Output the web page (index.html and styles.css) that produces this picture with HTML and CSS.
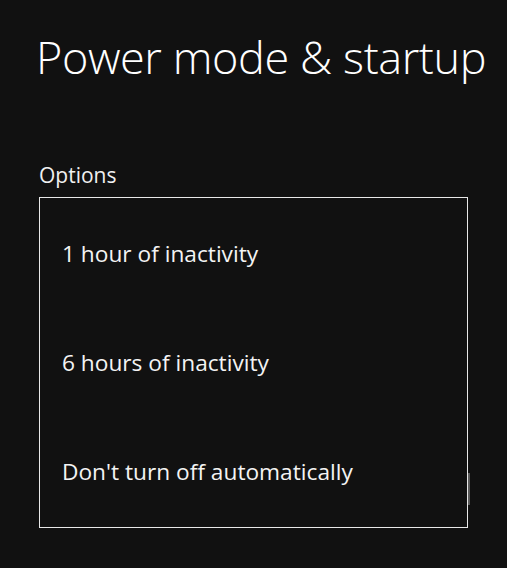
FILE: index.html
```html
<!DOCTYPE html>
<html>
<head>
<meta charset="utf-8">
<link rel="stylesheet" href="styles.css">
</head>
<body>
<div class="page">
  <h1 class="title">Power mode &amp; startup</h1>
  <div class="label">Options</div>
  <div class="list">
    <div class="item">1 hour of inactivity</div>
    <div class="item">6 hours of inactivity</div>
    <div class="item">Don't turn off automatically</div>
    <div class="scroll"></div>
  </div>
</div>
</body>
</html>
```
FILE: styles.css
```css
html, body {
  margin: 0;
  padding: 0;
  background: #111111;
}
.page {
  width: 507px;
  height: 568px;
  padding: 22px 0 0 39px;
  box-sizing: border-box;
  font-family: "Open Sans", "Noto Sans", sans-serif;
  color: #ffffff;
}
.title {
  margin: 0 0 0 -3px;
  font-weight: 300;
  font-size: 45px;
  line-height: 70px;
  white-space: nowrap;
  letter-spacing: -0.4px;
}
.label {
  margin-top: 70px;
  font-size: 21px;
  line-height: 26px;
  color: #f0f0f0;
}
.list {
  position: relative;
  margin-top: 9px;
  width: 429px;
  height: 331px;
  border: 1px solid #e8e8e8;
  padding-top: 1px;
  box-sizing: border-box;
}
.item {
  height: 109px;
  display: flex;
  align-items: center;
  padding-left: 22px;
  font-size: 22.7px;
  color: #f4f4f4;
}
.scroll {
  position: absolute;
  right: -3px;
  top: 275px;
  width: 2px;
  height: 32px;
  background: #5a5a5a;
}
```
